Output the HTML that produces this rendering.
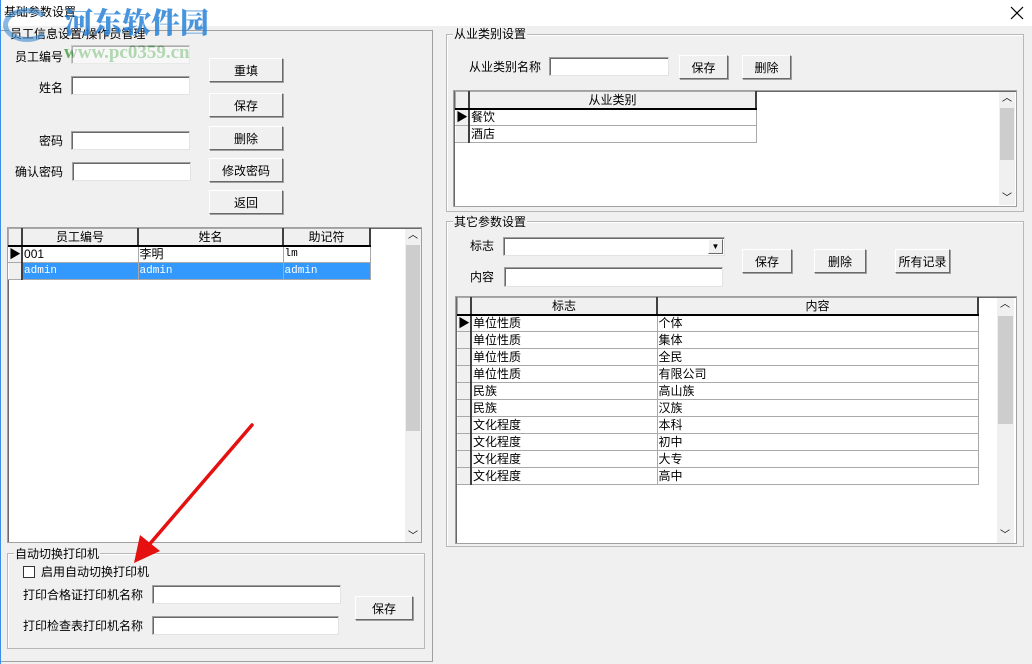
<!DOCTYPE html>
<html><head><meta charset="utf-8"><style>
*{box-sizing:border-box;margin:0;padding:0}
body{width:1032px;height:664px;background:#f0f0f0;position:relative;overflow:hidden;font-family:"Liberation Sans","Noto Sans CJK SC",sans-serif;font-size:12px;color:#000}
.a{position:absolute}
.t{position:absolute;white-space:nowrap;line-height:14px}
.in{position:absolute;background:#fff;border:1px solid #a0a0a0;border-right-color:#e3e3e3;border-bottom-color:#e3e3e3;box-shadow:inset 1px 1px 0 #696969}
.btn{position:absolute;background:#f0f0f0;border:1px solid #fff;border-right-color:#696969;border-bottom-color:#696969;box-shadow:1px 1px 0 #a0a0a0;text-align:center;font-size:12px;display:flex;align-items:center;justify-content:center}
.grp{position:absolute;border:1px solid #b8b8b8;box-shadow:inset 1px 1px 0 #fff}
.lbl{position:absolute;background:#f0f0f0;padding:0 1px;line-height:14px;white-space:nowrap}
.grid{position:absolute;background:#fff;border:1px solid #a0a0a0;box-shadow:inset 1px 1px 0 #696969}
table{border-collapse:collapse;position:absolute;font-size:12px}
td{border:1px solid #a9a9a9;height:17px;padding:0 1px;line-height:15px;white-space:nowrap;overflow:hidden}
th{font-weight:normal;background:#f0f0f0;border:1px solid #a9a9a9;border-bottom:2px solid #000;border-right:2px solid #404040;height:17px;line-height:14px}
td.ind{background:#f0f0f0;border-right:2px solid #404040;padding:0;width:12px;border-left:1px solid #fff}
.sb{position:absolute;background:#f0f0f0}
.th{position:absolute;background:#cdcdcd}
.mono{font-family:"Liberation Mono","Noto Sans CJK SC",monospace;font-size:11px}
.sel td{background:#3399ff;color:#fff}
</style></head><body>
<div class="a" style="left:0;top:0;width:1032px;height:26px;background:#fff"></div>
<div class="a" style="left:0;top:0;width:1px;height:664px;background:#3a8ee6"></div>
<div class="t" style="left:4px;top:5px;font-size:12px">基础参数设置</div>
<svg class="a" style="left:1010px;top:6px" width="14" height="14"><path d="M1 1L13 13M13 1L1 13" stroke="#000" stroke-width="1.2"/></svg>

<div class="a" style="left:1px;top:30px;width:432px;height:632px;border:1px solid #a0a0a0;border-left:none"></div>
<div class="lbl" style="left:9px;top:27px">员工信息设置/操作员管理</div>
<div class="a" style="left:3px;top:8px;width:48px;height:34px;border-radius:50%;border:5px solid rgba(60,140,210,.6);border-right-color:transparent"></div>
<div class="t" style="left:64px;top:5px;font-size:29px;line-height:34px;font-weight:900;color:rgba(40,130,215,.85);font-family:'Noto Serif CJK SC',serif">河东软件园</div>
<div class="t" style="left:64px;top:43px;font-size:19px;line-height:20px;font-weight:bold;color:rgba(60,160,60,.8);font-family:'Liberation Serif',serif">www.pc0359.cn</div>

<div class="t" style="left:15px;top:50px">员工编号</div>
<div class="in" style="left:71px;top:45px;width:119px;height:19px;opacity:.5"></div>
<div class="t" style="left:39px;top:81px">姓名</div>
<div class="in" style="left:71px;top:76px;width:119px;height:19px"></div>
<div class="t" style="left:39px;top:134px">密码</div>
<div class="in" style="left:71px;top:131px;width:119px;height:19px"></div>
<div class="t" style="left:15px;top:165px">确认密码</div>
<div class="in" style="left:72px;top:162px;width:119px;height:19px"></div>
<div class="btn" style="left:209px;top:58px;width:74px;height:24px">重填</div>
<div class="btn" style="left:209px;top:93px;width:74px;height:24px">保存</div>
<div class="btn" style="left:209px;top:126px;width:74px;height:24px">删除</div>
<div class="btn" style="left:209px;top:158px;width:74px;height:24px">修改密码</div>
<div class="btn" style="left:209px;top:190px;width:74px;height:24px">返回</div>

<div class="grid" style="left:7px;top:227px;width:415px;height:316px"></div>
<table style="left:8px;top:228px">
<tr><th style="width:12px"></th><th style="width:116px">员工编号</th><th style="width:145px">姓名</th><th style="width:87px">助记符</th></tr>
<tr><td class="ind">▶</td><td>001</td><td>李明</td><td class="mono">lm</td></tr>
<tr class="sel"><td class="ind" style="background:#f0f0f0"></td><td class="mono">admin</td><td class="mono">admin</td><td class="mono">admin</td></tr>
</table>
<div class="sb" style="left:405px;top:229px;width:16px;height:313px"></div>
<div class="th" style="left:406px;top:245px;width:14px;height:186px"></div>
<div class="t" style="left:408px;top:229px;font-size:10px">︿</div>
<div class="t" style="left:408px;top:530px;font-size:10px">﹀</div>

<div class="grp" style="left:7px;top:553px;width:418px;height:96px"></div>
<div class="lbl" style="left:14px;top:547px">自动切换打印机</div>
<div class="a" style="left:23px;top:566px;width:12px;height:12px;background:#fff;border:1px solid #333"></div>
<div class="t" style="left:41px;top:565px">启用自动切换打印机</div>
<div class="t" style="left:23px;top:588px">打印合格证打印机名称</div>
<div class="in" style="left:152px;top:585px;width:189px;height:19px"></div>
<div class="t" style="left:23px;top:619px">打印检查表打印机名称</div>
<div class="in" style="left:152px;top:616px;width:187px;height:19px"></div>
<div class="btn" style="left:355px;top:596px;width:58px;height:24px">保存</div>

<div class="grp" style="left:446px;top:34px;width:578px;height:178px"></div>
<div class="lbl" style="left:453px;top:27px">从业类别设置</div>
<div class="t" style="left:469px;top:60px">从业类别名称</div>
<div class="in" style="left:549px;top:57px;width:120px;height:19px"></div>
<div class="btn" style="left:679px;top:55px;width:49px;height:24px">保存</div>
<div class="btn" style="left:742px;top:55px;width:49px;height:24px">删除</div>
<div class="grid" style="left:453px;top:90px;width:564px;height:117px"></div>
<table style="left:455px;top:91px">
<tr><th style="width:12px"></th><th style="width:287px">从业类别</th></tr>
<tr><td class="ind">▶</td><td>餐饮</td></tr>
<tr><td class="ind"></td><td>酒店</td></tr>
</table>
<div class="sb" style="left:999px;top:92px;width:16px;height:113px"></div>
<div class="th" style="left:1000px;top:108px;width:14px;height:52px"></div>
<div class="t" style="left:1002px;top:92px;font-size:10px">︿</div>
<div class="t" style="left:1002px;top:192px;font-size:10px">﹀</div>

<div class="grp" style="left:446px;top:221px;width:578px;height:326px"></div>
<div class="lbl" style="left:453px;top:215px">其它参数设置</div>
<div class="t" style="left:470px;top:239px">标志</div>
<div class="in" style="left:503px;top:237px;width:222px;height:19px"></div>
<div class="btn" style="left:708px;top:239px;width:15px;height:15px;box-shadow:none;font-size:8px">▼</div>
<div class="t" style="left:470px;top:270px">内容</div>
<div class="in" style="left:504px;top:267px;width:219px;height:20px"></div>
<div class="btn" style="left:742px;top:249px;width:50px;height:24px">保存</div>
<div class="btn" style="left:814px;top:249px;width:52px;height:24px">删除</div>
<div class="btn" style="left:895px;top:249px;width:55px;height:24px">所有记录</div>
<div class="grid" style="left:455px;top:296px;width:562px;height:248px"></div>
<table style="left:457px;top:297px">
<tr><th style="width:12px"></th><th style="width:186px">标志</th><th style="width:321px">内容</th></tr>
<tr><td class="ind">▶</td><td>单位性质</td><td>个体</td></tr>
<tr><td class="ind"></td><td>单位性质</td><td>集体</td></tr>
<tr><td class="ind"></td><td>单位性质</td><td>全民</td></tr>
<tr><td class="ind"></td><td>单位性质</td><td>有限公司</td></tr>
<tr><td class="ind"></td><td>民族</td><td>高山族</td></tr>
<tr><td class="ind"></td><td>民族</td><td>汉族</td></tr>
<tr><td class="ind"></td><td>文化程度</td><td>本科</td></tr>
<tr><td class="ind"></td><td>文化程度</td><td>初中</td></tr>
<tr><td class="ind"></td><td>文化程度</td><td>大专</td></tr>
<tr><td class="ind"></td><td>文化程度</td><td>高中</td></tr>
</table>
<div class="sb" style="left:997px;top:298px;width:17px;height:245px"></div>
<div class="th" style="left:998px;top:316px;width:15px;height:108px"></div>
<div class="t" style="left:1000px;top:298px;font-size:10px">︿</div>
<div class="t" style="left:1000px;top:529px;font-size:10px">﹀</div>

<svg class="a" style="left:0;top:0" width="1032" height="664">
<line x1="252" y1="425" x2="148" y2="546" stroke="#e51010" stroke-width="3.5" stroke-linecap="round"/>
<polygon points="134,563 140,535 160,551" fill="#e51010"/>
</svg>
</body></html>
